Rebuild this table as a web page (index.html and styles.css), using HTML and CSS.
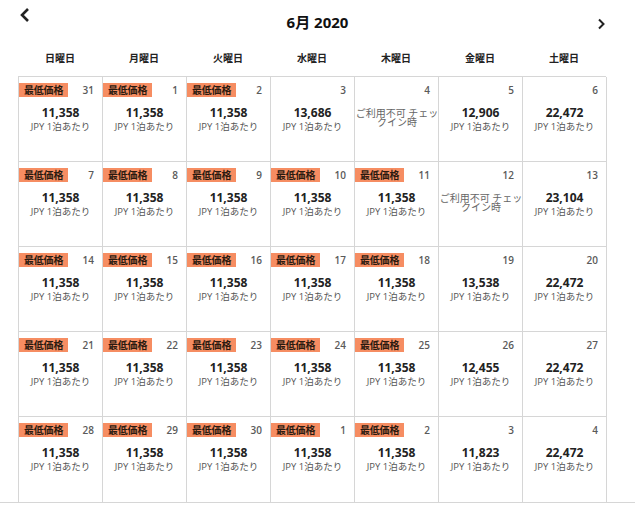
FILE: index.html
```html
<!DOCTYPE html>
<html lang="ja">
<head>
<meta charset="utf-8">
<link rel="stylesheet" href="styles.css">
</head>
<body>
<div class="page">
  <div class="topbar">
    <button class="nav nav-prev" aria-label="前の月">
      <svg width="12" height="16" viewBox="0 0 12 16"><path d="M9 2 L3 8 L9 14" fill="none" stroke="#222" stroke-width="2.6" stroke-linecap="butt" stroke-linejoin="miter"/></svg>
    </button>
    <div class="title">6月 2020</div>
    <button class="nav nav-next" aria-label="次の月">
      <svg width="9" height="12" viewBox="0 0 9 12"><path d="M2 1.5 L6.5 6 L2 10.5" fill="none" stroke="#222" stroke-width="2" stroke-linecap="butt"/></svg>
    </button>
  </div>
  <div class="weekdays">
    <div>日曜日</div><div>月曜日</div><div>火曜日</div><div>水曜日</div><div>木曜日</div><div>金曜日</div><div>土曜日</div>
  </div>
  <div class="cal-body">
    <div class="grid">
      <div class="cell"><div class="head"><span class="badge">最低価格</span><span class="day">31</span></div><div class="price">11,358</div><div class="unit">JPY 1泊あたり</div></div>
      <div class="cell"><div class="head"><span class="badge">最低価格</span><span class="day">1</span></div><div class="price">11,358</div><div class="unit">JPY 1泊あたり</div></div>
      <div class="cell"><div class="head"><span class="badge">最低価格</span><span class="day">2</span></div><div class="price">11,358</div><div class="unit">JPY 1泊あたり</div></div>
      <div class="cell"><div class="head"><span class="day">3</span></div><div class="price">13,686</div><div class="unit">JPY 1泊あたり</div></div>
      <div class="cell"><div class="head"><span class="day">4</span></div><div class="na">ご利用不可 チェックイン時</div></div>
      <div class="cell"><div class="head"><span class="day">5</span></div><div class="price">12,906</div><div class="unit">JPY 1泊あたり</div></div>
      <div class="cell"><div class="head"><span class="day">6</span></div><div class="price">22,472</div><div class="unit">JPY 1泊あたり</div></div>

      <div class="cell"><div class="head"><span class="badge">最低価格</span><span class="day">7</span></div><div class="price">11,358</div><div class="unit">JPY 1泊あたり</div></div>
      <div class="cell"><div class="head"><span class="badge">最低価格</span><span class="day">8</span></div><div class="price">11,358</div><div class="unit">JPY 1泊あたり</div></div>
      <div class="cell"><div class="head"><span class="badge">最低価格</span><span class="day">9</span></div><div class="price">11,358</div><div class="unit">JPY 1泊あたり</div></div>
      <div class="cell"><div class="head"><span class="badge">最低価格</span><span class="day">10</span></div><div class="price">11,358</div><div class="unit">JPY 1泊あたり</div></div>
      <div class="cell"><div class="head"><span class="badge">最低価格</span><span class="day">11</span></div><div class="price">11,358</div><div class="unit">JPY 1泊あたり</div></div>
      <div class="cell"><div class="head"><span class="day">12</span></div><div class="na">ご利用不可 チェックイン時</div></div>
      <div class="cell"><div class="head"><span class="day">13</span></div><div class="price">23,104</div><div class="unit">JPY 1泊あたり</div></div>

      <div class="cell"><div class="head"><span class="badge">最低価格</span><span class="day">14</span></div><div class="price">11,358</div><div class="unit">JPY 1泊あたり</div></div>
      <div class="cell"><div class="head"><span class="badge">最低価格</span><span class="day">15</span></div><div class="price">11,358</div><div class="unit">JPY 1泊あたり</div></div>
      <div class="cell"><div class="head"><span class="badge">最低価格</span><span class="day">16</span></div><div class="price">11,358</div><div class="unit">JPY 1泊あたり</div></div>
      <div class="cell"><div class="head"><span class="badge">最低価格</span><span class="day">17</span></div><div class="price">11,358</div><div class="unit">JPY 1泊あたり</div></div>
      <div class="cell"><div class="head"><span class="badge">最低価格</span><span class="day">18</span></div><div class="price">11,358</div><div class="unit">JPY 1泊あたり</div></div>
      <div class="cell"><div class="head"><span class="day">19</span></div><div class="price">13,538</div><div class="unit">JPY 1泊あたり</div></div>
      <div class="cell"><div class="head"><span class="day">20</span></div><div class="price">22,472</div><div class="unit">JPY 1泊あたり</div></div>

      <div class="cell"><div class="head"><span class="badge">最低価格</span><span class="day">21</span></div><div class="price">11,358</div><div class="unit">JPY 1泊あたり</div></div>
      <div class="cell"><div class="head"><span class="badge">最低価格</span><span class="day">22</span></div><div class="price">11,358</div><div class="unit">JPY 1泊あたり</div></div>
      <div class="cell"><div class="head"><span class="badge">最低価格</span><span class="day">23</span></div><div class="price">11,358</div><div class="unit">JPY 1泊あたり</div></div>
      <div class="cell"><div class="head"><span class="badge">最低価格</span><span class="day">24</span></div><div class="price">11,358</div><div class="unit">JPY 1泊あたり</div></div>
      <div class="cell"><div class="head"><span class="badge">最低価格</span><span class="day">25</span></div><div class="price">11,358</div><div class="unit">JPY 1泊あたり</div></div>
      <div class="cell"><div class="head"><span class="day">26</span></div><div class="price">12,455</div><div class="unit">JPY 1泊あたり</div></div>
      <div class="cell"><div class="head"><span class="day">27</span></div><div class="price">22,472</div><div class="unit">JPY 1泊あたり</div></div>

      <div class="cell"><div class="head"><span class="badge">最低価格</span><span class="day">28</span></div><div class="price">11,358</div><div class="unit">JPY 1泊あたり</div></div>
      <div class="cell"><div class="head"><span class="badge">最低価格</span><span class="day">29</span></div><div class="price">11,358</div><div class="unit">JPY 1泊あたり</div></div>
      <div class="cell"><div class="head"><span class="badge">最低価格</span><span class="day">30</span></div><div class="price">11,358</div><div class="unit">JPY 1泊あたり</div></div>
      <div class="cell"><div class="head"><span class="badge">最低価格</span><span class="day">1</span></div><div class="price">11,358</div><div class="unit">JPY 1泊あたり</div></div>
      <div class="cell"><div class="head"><span class="badge">最低価格</span><span class="day">2</span></div><div class="price">11,358</div><div class="unit">JPY 1泊あたり</div></div>
      <div class="cell"><div class="head"><span class="day">3</span></div><div class="price">11,823</div><div class="unit">JPY 1泊あたり</div></div>
      <div class="cell"><div class="head"><span class="day">4</span></div><div class="price">22,472</div><div class="unit">JPY 1泊あたり</div></div>
    </div>
  </div>
</div>
</body>
</html>
```

FILE: styles.css
```css
* { box-sizing: border-box; }
html, body { margin: 0; padding: 0; background: #fff; }
body {
  font-family: "Open Sans", "Noto Sans CJK JP", sans-serif;
  color: #222;
}
.page { width: 635px; }
.topbar {
  height: 44px;
  display: flex;
  align-items: flex-start;
  justify-content: space-between;
  padding: 0 29px 0 19px;
}
.nav {
  background: none;
  border: 0;
  padding: 0;
  margin: 0;
  display: block;
  cursor: pointer;
}
.nav svg { display: block; }
.nav-prev { margin-top: 7px; }
.nav-next { margin-top: 18px; }
.title {
  font-size: 15px;
  font-weight: 700;
  line-height: 20px;
  margin-top: 12px;
  padding-left: 7px;
  color: #111;
}
.weekdays {
  margin-left: 18px;
  width: 588px;
  height: 32px;
  display: grid;
  grid-template-columns: repeat(7, 84px);
  align-items: start;
  padding-top: 7px;
}
.weekdays div {
  text-align: center;
  font-size: 10px;
  font-weight: 700;
  line-height: 14px;
  color: #222;
}
.cal-body {
  border-bottom: 1px solid #d6d6d6;
  padding-left: 18px;
}
.grid {
  width: 588px;
  display: grid;
  grid-template-columns: repeat(7, 84px);
  grid-auto-rows: 85px;
  border-left: 1px solid #d6d6d6;
  border-top: 1px solid #d6d6d6;
}
.cell {
  border-right: 1px solid #d6d6d6;
  border-bottom: 1px solid #d6d6d6;
  padding-top: 6px;
  text-align: center;
}
.grid .cell:nth-last-child(-n+7) { border-bottom: 0; }
.grid .cell:nth-child(7n+1) { margin-left: -1px; padding-left: 1px; }
.head {
  display: flex;
  justify-content: flex-end;
  align-items: center;
  height: 14px;
  padding-right: 8px;
}
.badge {
  margin-right: auto;
  background: #f68d62;
  color: #2a1a10;
  font-size: 10px;
  font-weight: 700;
  line-height: 14px;
  height: 14px;
  padding: 0 5px;
  letter-spacing: -0.2px;
}
.day {
  font-size: 10px;
  font-weight: 600;
  color: #5a5a5a;
  line-height: 14px;
}
.price {
  margin-top: 9px;
  font-size: 12px;
  font-weight: 700;
  line-height: 14px;
  color: #222;
}
.unit {
  font-size: 9.5px;
  line-height: 13px;
  color: #555;
}
.na {
  margin-top: 12px;
  font-size: 10px;
  line-height: 9px;
  color: #666;
  margin-left: -1px;
  margin-right: -2px;
}
```
